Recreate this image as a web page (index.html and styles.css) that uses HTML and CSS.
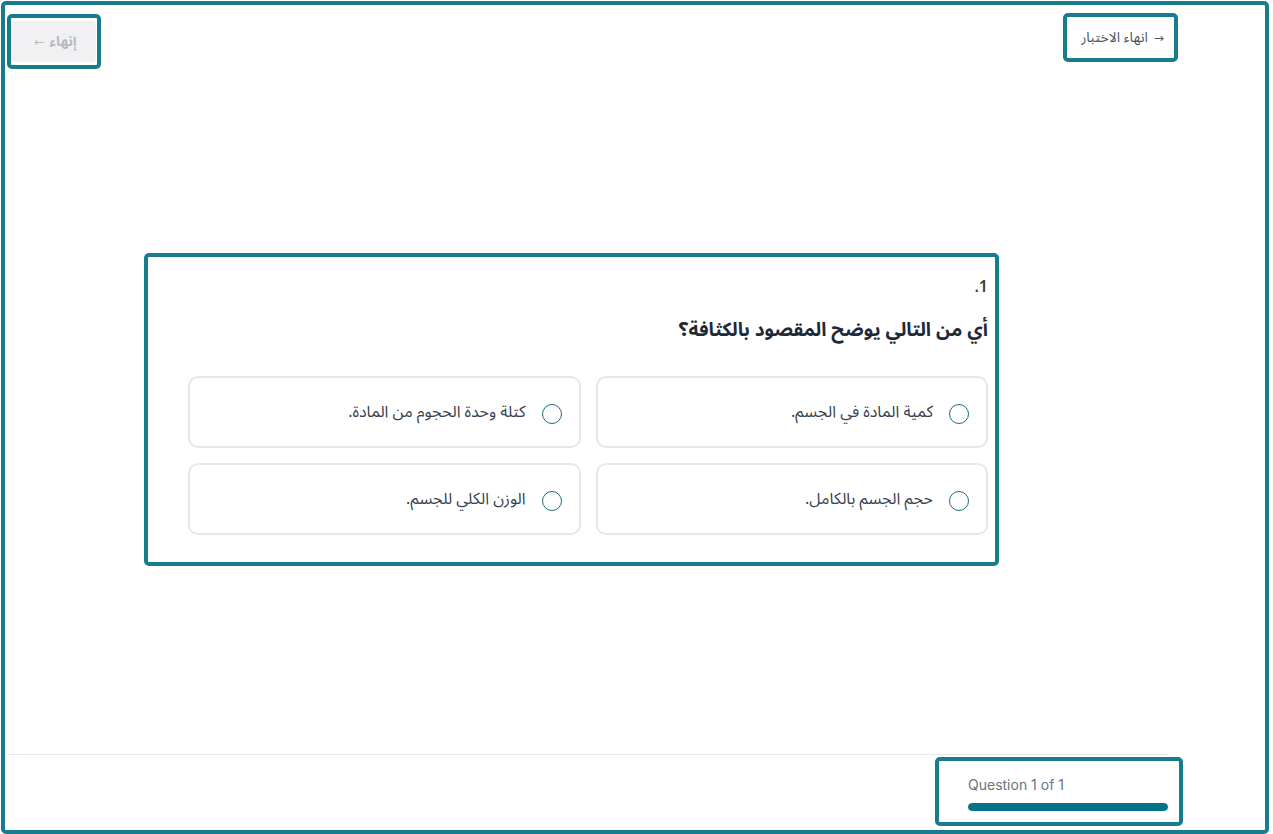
FILE: index.html
```html
<!DOCTYPE html>
<html lang="ar" dir="rtl">
<head>
<meta charset="utf-8">
<title>اختبار</title>
<link rel="stylesheet" href="styles.css">
</head>
<body>
<div class="frame">
  <header class="topbar">
    <div class="mark mark-exit">
      <button class="exit-btn" type="button"><span class="arrow">→</span><span>انهاء الاختبار</span></button>
    </div>
    <div class="mark mark-finish">
      <button class="finish-btn" type="button" disabled><span>إنهاء</span><span class="arrow">←</span></button>
    </div>
  </header>

  <main class="stage">
    <section class="mark question-card">
      <div class="q-number">1.</div>
      <h2 class="q-text">أي من التالي يوضح المقصود بالكثافة؟</h2>
      <div class="options">
        <label class="option"><span class="radio"></span><span class="option-text">كمية المادة في الجسم.</span></label>
        <label class="option"><span class="radio"></span><span class="option-text">كتلة وحدة الحجوم من المادة.</span></label>
        <label class="option"><span class="radio"></span><span class="option-text">حجم الجسم بالكامل.</span></label>
        <label class="option"><span class="radio"></span><span class="option-text">الوزن الكلي للجسم.</span></label>
      </div>
    </section>
  </main>

  <footer class="footer">
    <div class="mark progress-box">
      <div class="progress-label">Question 1 of 1</div>
      <div class="progress-track"><div class="progress-fill" style="width:100%"></div></div>
    </div>
  </footer>
</div>
</body>
</html>
```

FILE: styles.css
```css
* {
  box-sizing: border-box;
}

html, body {
  margin: 0;
  padding: 0;
  background: #ffffff;
}

body {
  font-family: "Noto Sans Arabic", "Noto Sans", "DejaVu Sans", sans-serif;
  color: #374151;
}

/* highlighted regions share one teal outline */
.mark {
  border: 4px solid #167c8e;
  border-radius: 5px;
}

.frame {
  margin: 1px 4px 0 1px;
  width: 1268px;
  height: 833px;
  border: 4px solid #167c8e;
  border-radius: 5px;
  display: flex;
  flex-direction: column;
}

/* top bar */
.topbar {
  display: flex;
  justify-content: space-between;
  align-items: flex-start;
  padding: 8px 87px 0 2px;
}

.mark-exit {
  width: 115px;
  height: 49px;
  display: flex;
}

.exit-btn {
  flex: 1;
  border: 0;
  background: transparent;
  font-family: inherit;
  font-size: 14px;
  color: #4b5563;
  display: flex;
  align-items: center;
  justify-content: center;
  gap: 6px;
  padding: 0 0 0 4px;
  cursor: pointer;
}

.exit-btn .arrow {
  font-family: "DejaVu Sans", sans-serif;
  font-size: 12px;
}

.mark-finish {
  margin-top: 1px;
  width: 94px;
  height: 55px;
  padding: 3px 1px 3px 0;
  display: flex;
}

.finish-btn {
  flex: 1;
  border: 0;
  border-radius: 4px;
  background: #f1f1f3;
  font-family: inherit;
  font-size: 14px;
  font-weight: 700;
  color: #b7bac1;
  display: flex;
  align-items: center;
  justify-content: center;
  gap: 5px;
  padding: 0 0 0 4px;
}

.finish-btn .arrow {
  font-family: "DejaVu Sans", sans-serif;
  font-weight: 400;
  font-size: 12px;
}

/* question area */
.stage {
  flex: 1;
  display: flex;
  align-items: center;
  padding: 0 0 4px 139px;
  direction: ltr;
}

.question-card {
  direction: rtl;
  width: 855px;
  padding: 18px 7px 27px 40px;
}

.q-number {
  font-size: 16px;
  line-height: 24px;
  font-weight: 600;
  color: #374151;
}

.q-text {
  margin: 17px 0 0;
  font-size: 19px;
  line-height: 28px;
  font-weight: 700;
  color: #1f2937;
}

.options {
  margin-top: 32px;
  display: grid;
  grid-template-columns: 1fr 1fr;
  grid-auto-rows: 72px;
  gap: 15px;
}

.option {
  display: flex;
  align-items: center;
  gap: 16px;
  padding: 0 17px;
  border: 2px solid #e5e7eb;
  border-radius: 10px;
  cursor: pointer;
}

.radio {
  flex: none;
  width: 20px;
  height: 20px;
  border: 1.5px solid #1e6b7c;
  border-radius: 50%;
  margin-top: 4px;
}

.option-text {
  font-size: 16px;
  line-height: 24px;
  color: #374151;
}

/* footer progress */
.footer {
  margin: 0 97px 0 3px;
  height: 76px;
  border-top: 1px solid #e5e7eb;
  display: flex;
  justify-content: flex-end;
  align-items: flex-start;
  direction: ltr;
}

.progress-box {
  margin-top: 2px;
  margin-right: -15px;
  width: 248px;
  height: 69px;
  padding: 14px 11px 0 29px;
}

.progress-label {
  font-family: Inter, "Liberation Sans", sans-serif;
  font-size: 14px;
  line-height: 20px;
  color: #6b7280;
}

.progress-track {
  margin-top: 8px;
  height: 8px;
  border-radius: 4px;
  background: #e5e7eb;
  overflow: hidden;
}

.progress-fill {
  height: 100%;
  border-radius: 4px;
  background: #047489;
}
```
